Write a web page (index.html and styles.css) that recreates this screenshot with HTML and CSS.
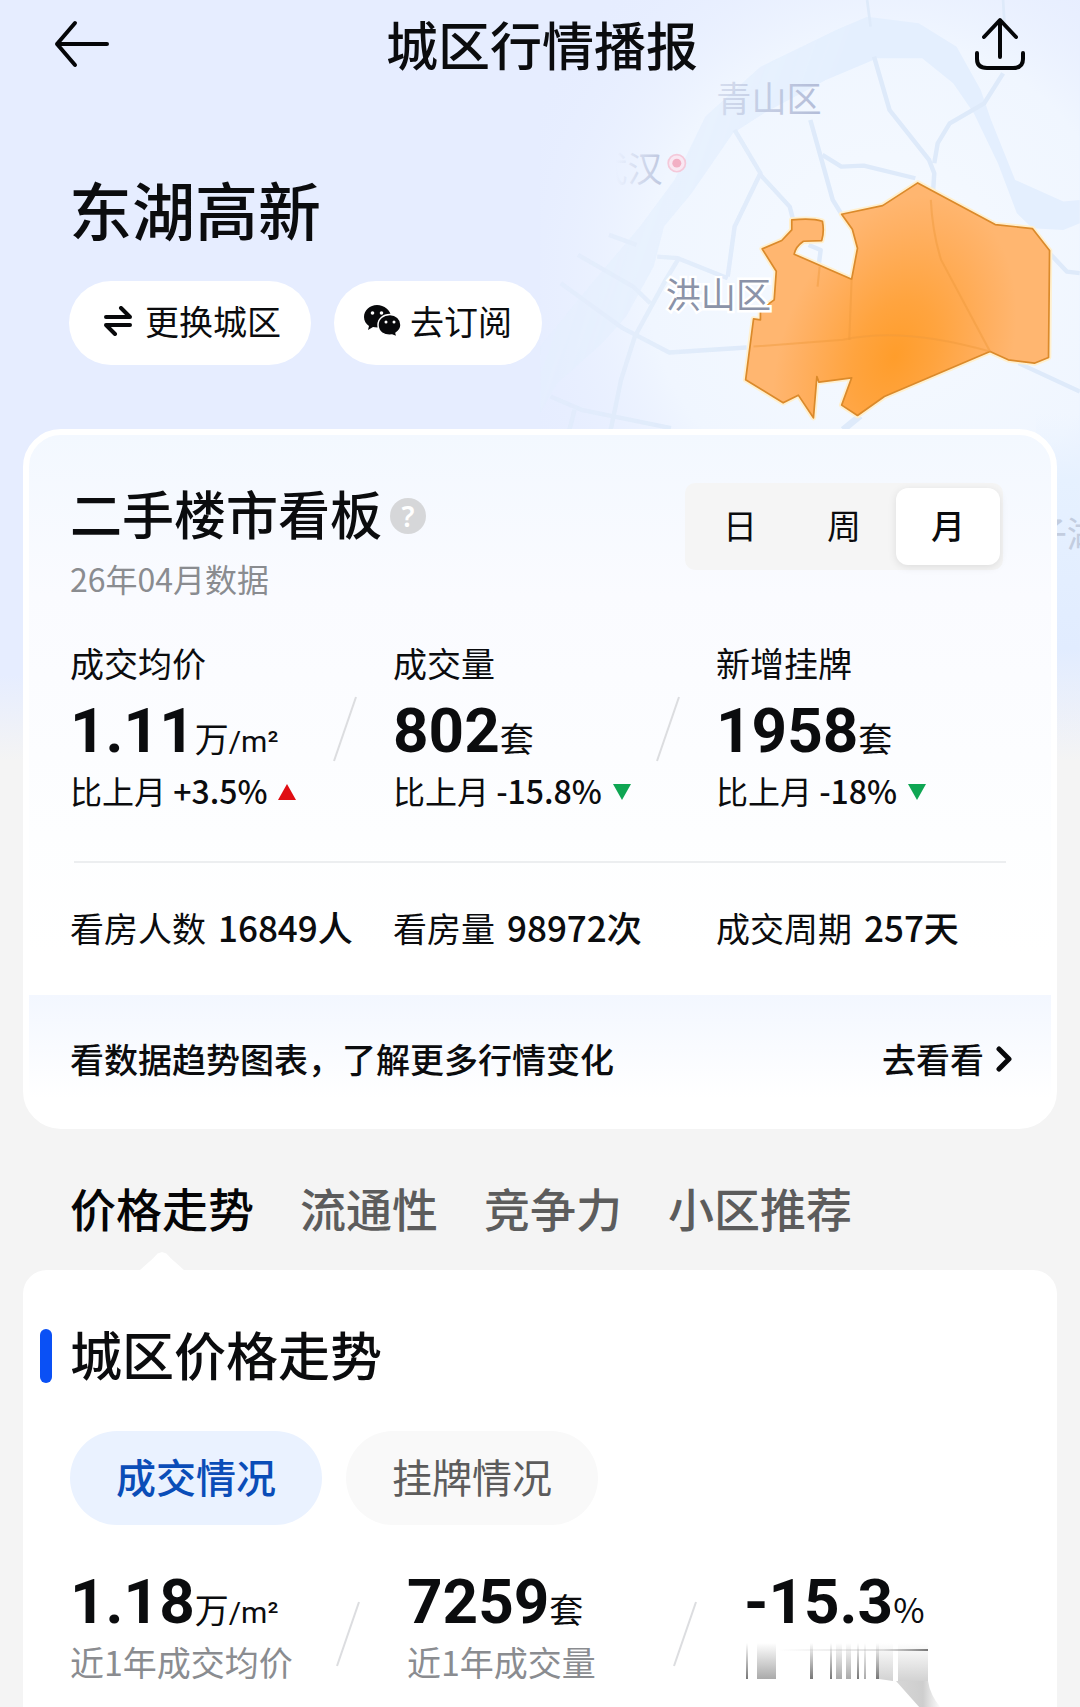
FILE: index.html
```html
<!DOCTYPE html>
<html lang="zh-CN">
<head>
<meta charset="utf-8">
<meta name="viewport" content="width=device-width, initial-scale=1">
<title>城区行情播报</title>
<link rel="stylesheet" href="styles.css">
</head>
<body>
<div class="page">
  <svg class="map" viewBox="0 0 1568 2179" aria-hidden="true">
    <defs>
      <linearGradient id="fade" x1="0" y1="0.2" x2="0.5" y2="0.35">
        <stop offset="0" stop-color="#fff" stop-opacity="0.25"/>
        <stop offset="1" stop-color="#fff"/>
      </linearGradient>
      <radialGradient id="land" gradientUnits="userSpaceOnUse" cx="1000" cy="800" r="1150">
        <stop offset="0" stop-color="#f6faff"/>
        <stop offset="0.6" stop-color="#f0f6ff"/>
        <stop offset="1" stop-color="#e6edff" stop-opacity="0"/>
      </radialGradient>
      <linearGradient id="side" x1="0" y1="0" x2="0" y2="1">
        <stop offset="0" stop-color="#eaf3ff" stop-opacity="0"/>
        <stop offset="0.2" stop-color="#e6f1ff"/>
        <stop offset="0.7" stop-color="#e1ecff"/>
        <stop offset="1" stop-color="#f4f4f4" stop-opacity="0"/>
      </linearGradient>
      <radialGradient id="heat" gradientUnits="userSpaceOnUse" cx="1030" cy="1070" r="500" gradientTransform="translate(1030 1070) rotate(-70) scale(1 .66) translate(-1030 -1070)">
        <stop offset="0" stop-color="#ff9d2b"/>
        <stop offset="0.35" stop-color="#ffa43f"/>
        <stop offset="0.8" stop-color="#ffb062"/>
        <stop offset="1" stop-color="#ffb670"/>
      </radialGradient>
      <linearGradient id="wuhan" gradientUnits="userSpaceOnUse" x1="220" y1="0" x2="350" y2="0">
        <stop offset="0" stop-color="#b4bdd8" stop-opacity="0"/>
        <stop offset="1" stop-color="#b4bdd8" stop-opacity="0.8"/>
      </linearGradient>
      <linearGradient id="qingshan" gradientUnits="userSpaceOnUse" x1="500" y1="0" x2="810" y2="0">
        <stop offset="0" stop-color="#b4bdd8" stop-opacity="0.4"/>
        <stop offset="1" stop-color="#b4bdd8"/>
      </linearGradient>
      <mask id="edge"><rect width="1568" height="1400" fill="url(#fade)"/></mask>
    </defs>
    <rect width="1568" height="1900" fill="url(#land)"/>
    <rect x="1440" y="1200" width="128" height="979" fill="url(#side)"/>
    <g transform="scale(1 .968)">
      <g mask="url(#edge)" fill="none" stroke="#deeafa" stroke-width="13" stroke-linejoin="round">
        <path fill="#e4effe" stroke="none" d="M0 1040 L150 850 L290 680 L390 540 L480 350 L640 200 L860 90 L950 50 L1100 70 L1210 140 L1280 270 L1310 360 L1380 540 L1520 605 L1568 600 L1568 670 L1520 690 L1430 685 L1385 640 L1330 490 L1260 340 L1200 250 L1110 175 L980 175 L830 240 L650 340 L560 400 L440 580 L360 680 L330 800 L250 950 L180 1030 L50 1150 L0 1240Z"/>
        <path d="M970 170 L1015 330 L1130 480 L1145 520 L1140 600"/>
        <path d="M1345 220 L1290 310 L1190 370 L1155 430 L1145 490"/>
        <path d="M785 360 L815 470 L850 600 L880 650"/>
        <path d="M820 465 L875 500 L940 497 L1090 535"/>
        <path d="M565 390 L640 520 L565 680 L545 830"/>
        <path d="M640 525 L725 620 L735 660"/>
        <path d="M340 770 L400 775 L545 835"/>
        <path d="M400 780 L365 840 L275 1010 L235 1140 L205 1290"/>
        <path d="M110 765 L270 860 L320 910"/>
        <path d="M60 850 L240 985 L375 1058 L600 1043"/>
        <path d="M30 1190 L120 1230 L380 1285 M100 1230 L85 1290"/>
        <path d="M200 705 L280 735"/>
        <path d="M780 735 L815 750 L810 790"/>
        <path d="M1480 760 L1530 815 L1568 820"/>
        <path d="M1390 1090 L1568 1175"/>
        <path d="M880 1290 L930 1248" stroke-width="20"/>
        <path d="M1345 0 L1350 90 M950 0 L960 80" stroke-width="8"/>
      </g>
      <path fill="none" stroke="#fff0cf" stroke-width="16" stroke-linejoin="round" d="M876 643 L995 617 L1097 549 L1322 674 L1430 686 L1480 752 L1477 1073 L1436 1090 L1360 1080 L1307 1055 L1000 1190 L922 1247 L876 1216 L905 1134 L810 1147 L804 1130 L794 1254 L750 1186 L706 1209 L597 1140 L620 957 L640 960 L640 930 L680 900 L686 814 L645 747 L702 722 L731 690 L731 660 Q790 654 820 664 Q826 695 818 722 L765 724 Q742 740 738 763 L905 838 L922 745 L907 688Z"/>
      <path fill="url(#heat)" stroke="#db8a2b" stroke-width="5" stroke-linejoin="round" d="M876 643 L995 617 L1097 549 L1322 674 L1430 686 L1480 752 L1477 1073 L1436 1090 L1360 1080 L1307 1055 L1000 1190 L922 1247 L876 1216 L905 1134 L810 1147 L804 1130 L794 1254 L750 1186 L706 1209 L597 1140 L620 957 L640 960 L640 930 L680 900 L686 814 L645 747 L702 722 L731 690 L731 660 Q790 654 820 664 Q826 695 818 722 L765 724 Q742 740 738 763 L905 838 L922 745 L907 688Z"/>
      <g fill="none" stroke="#ee983c" stroke-opacity=".45" stroke-width="6">
        <path d="M1135 600 Q1140 700 1165 780 L1307 1055 Q1050 980 880 1020 L620 1040"/>
        <path d="M905 838 L898 1020 M812 800 L806 860"/>
      </g>
    </g>
    <circle cx="397" cy="474" r="25" fill="#f9e7f2" stroke="#f4c9da" stroke-width="5"/>
    <circle cx="397" cy="474" r="13" fill="#f2afc4"/>
    <g class="map-text">
      <text x="512" y="326" fill="url(#qingshan)">青山区</text>
      <text x="152" y="528" fill="url(#wuhan)">武汉</text>
      <text class="near" x="365" y="895">洪山区</text>
      <text x="1428" y="1588" fill="#c3cddf">子湖</text>
    </g>
  </svg>

  <header class="topbar">
    <button class="icon-button" type="button" aria-label="返回">
      <svg width="56" height="48" viewBox="0 0 56 48" fill="none" stroke="#050608" stroke-width="4" stroke-linecap="round" stroke-linejoin="round"><path d="M21 3 L3 24 L21 45 M3 24 H53"/></svg>
    </button>
    <h1 class="topbar-title">城区行情播报</h1>
    <button class="icon-button" type="button" aria-label="分享">
      <svg width="52" height="54" viewBox="0 0 52 54" fill="none" stroke="#050608" stroke-width="4" stroke-linecap="round" stroke-linejoin="round"><path d="M26 40 V4 M10 20 L26 3 L42 20 M3 36 V42 Q3 51 13 51 H39 Q49 51 49 42 V36"/></svg>
    </button>
  </header>

  <section class="hero">
    <h2 class="district">东湖高新</h2>
    <div class="hero-actions">
      <button class="chip chip-swap" type="button">
        <svg width="28" height="30" viewBox="0 0 28 30" fill="none" stroke="#08090b" stroke-width="4" stroke-linecap="round" stroke-linejoin="round"><path d="M2 11 H26 L17 2 M26 19 H2 L11 28"/></svg>
        更换城区
      </button>
      <button class="chip chip-wechat" type="button">
        <svg width="38" height="32" viewBox="0 0 38 32"><path fill="#08090b" d="M13 0C6 0 0 5 0 12c0 4 2 7 5 9l-1 4 5-3c5 1 18 1 18-10C27 5 20 0 13 0Z"/><path fill="#08090b" stroke="#fff" stroke-width="1.5" d="M26 9.500C19 9.500 14 14 14 20c0 7 6 11 14 10l5 2-1-4c3-2 5-4.500 5-8 0-6-5-10.500-11-10.500Z"/><g fill="#fff"><circle cx="8.500" cy="8" r="1.800"/><circle cx="17.500" cy="8" r="1.800"/><circle cx="22" cy="17" r="1.500"/><circle cx="30" cy="17" r="1.500"/></g></svg>
        去订阅
      </button>
    </div>
  </section>

  <section class="board">
    <div class="board-head">
      <div>
        <h2 class="heading">二手楼市看板
          <button class="help" type="button" aria-label="说明">?</button>
        </h2>
        <p class="date">26年04月数据</p>
      </div>
      <div class="segment" role="group" aria-label="统计周期">
        <button type="button">日</button>
        <button type="button">周</button>
        <button type="button" class="is-on" aria-pressed="true">月</button>
      </div>
    </div>

    <div class="stats">
      <div class="stat">
        <div>
          <p class="label">成交均价</p>
          <p class="value"><b>1.11</b><span>万<i>/m²</i></span></p>
          <p class="compare">比上月 <em>+3.5%</em><svg width="20" height="18" viewBox="0 0 20 18"><path fill="#e00d12" d="M10 1 L19 17 H1Z"/></svg></p>
        </div>
        <svg class="slash" width="24" height="66" viewBox="0 0 24 66"><path d="M23 1 L1 65"/></svg>
      </div>
      <div class="stat">
        <div>
          <p class="label">成交量</p>
          <p class="value"><b>802</b><span>套</span></p>
          <p class="compare">比上月 <em>-15.8%</em><svg width="20" height="18" viewBox="0 0 20 18"><path fill="#0fa653" d="M10 17 L19 1 H1Z"/></svg></p>
        </div>
        <svg class="slash" width="24" height="66" viewBox="0 0 24 66"><path d="M23 1 L1 65"/></svg>
      </div>
      <div class="stat">
        <div>
          <p class="label">新增挂牌</p>
          <p class="value"><b>1958</b><span>套</span></p>
          <p class="compare">比上月 <em>-18%</em><svg width="20" height="18" viewBox="0 0 20 18"><path fill="#0fa653" d="M10 17 L19 1 H1Z"/></svg></p>
        </div>
      </div>
    </div>

    <hr class="rule">

    <div class="facts">
      <p>看房人数<em>16849人</em></p>
      <p>看房量<em>98972次</em></p>
      <p>成交周期<em>257天</em></p>
    </div>

    <a class="more" href="#trend">
      <span>看数据趋势图表，了解更多行情变化</span>
      <span class="more-go">去看看
        <svg width="16" height="26" viewBox="0 0 16 26" fill="none" stroke="#08090b" stroke-width="5" stroke-linecap="round" stroke-linejoin="round"><path d="M3 3 L13 13 L3 23"/></svg>
      </span>
    </a>
  </section>

  <nav class="tabs">
    <a class="is-on" href="#trend">价格走势</a>
    <a href="#flow">流通性</a>
    <a href="#rival">竞争力</a>
    <a href="#estates">小区推荐</a>
  </nav>

  <section class="trend" id="trend">
    <h2 class="heading trend-title">城区价格走势</h2>
    <div class="pills">
      <button class="is-on" type="button" aria-pressed="true">成交情况</button>
      <button type="button">挂牌情况</button>
    </div>
    <div class="totals">
      <div class="stat">
        <div>
          <p class="value"><b>1.18</b><span>万<i>/m²</i></span></p>
          <p class="caption">近1年成交均价</p>
        </div>
        <svg class="slash" width="24" height="66" viewBox="0 0 24 66"><path d="M23 1 L1 65"/></svg>
      </div>
      <div class="stat">
        <div>
          <p class="value"><b>7259</b><span>套</span></p>
          <p class="caption">近1年成交量</p>
        </div>
        <svg class="slash" width="24" height="66" viewBox="0 0 24 66"><path d="M23 1 L1 65"/></svg>
      </div>
      <div class="stat">
        <div>
          <p class="value"><b>-15.3</b><span>%</span></p>
          <svg class="smear" width="200" height="65" viewBox="0 0 200 65" aria-hidden="true">
            <defs>
              <linearGradient id="down" x1="0" y1="0" x2="0" y2="1"><stop offset="0" stop-color="#777" stop-opacity="0"/><stop offset="1" stop-color="#777"/></linearGradient>
              <linearGradient id="haze" x1="0" y1="0" x2="0" y2="1"><stop offset="0" stop-color="#aaa" stop-opacity="0"/><stop offset="1" stop-color="#aaa"/></linearGradient>
              <linearGradient id="cloud" x1="0" y1="0" x2="0" y2="1"><stop offset="0" stop-color="#d2d2d2" stop-opacity="0"/><stop offset="1" stop-color="#d2d2d2"/></linearGradient>
              <linearGradient id="tail" x1="0" y1="0" x2="1" y2="0"><stop offset="0" stop-color="#d6d6d6"/><stop offset=".6" stop-color="#cecece"/><stop offset="1" stop-color="#fff"/></linearGradient>
              <linearGradient id="line" x1="0" y1="0" x2="1" y2="0"><stop offset="0" stop-color="#888" stop-opacity="0"/><stop offset=".7" stop-color="#999" stop-opacity=".3"/><stop offset="1" stop-color="#777"/></linearGradient>
            </defs>
            <path fill="url(#down)" d="M2 0h2v36h-2z M66 0h3v36h-3z M86 0h2v36h-2z M113 0h2v36h-2z M132 0h3v36h-3z"/>
            <path fill="url(#haze)" d="M13 0h19v36h-19z M92 0h6v36h-6z M102 0h5v36h-5z M120 0h2v36h-2z"/>
            <path fill="url(#cloud)" d="M135 0h14v38l-14-2z M154 0h30v38h-30z"/>
            <path fill="url(#tail)" d="M152 38 H184 Q186 52 197 65 H176Z"/>
            <path fill="url(#line)" d="M34 6h150v2h-150z"/>
          </svg>
        </div>
      </div>
    </div>
  </section>
</div>
</body>
</html>
```
FILE: styles.css
```css
* { box-sizing: border-box; }

body {
  margin: 0;
  background: #f4f4f4;
  color: #0b0c0e;
  font-family: "Noto Sans CJK SC", sans-serif;
  font-size: 34px;
  line-height: 48px;
}

h1, h2, p { margin: 0; font-weight: 500; }
em, i { font-style: normal; }
svg { flex: none; }
a { color: inherit; text-decoration: none; }

button {
  padding: 0;
  border: 0;
  background: none;
  color: inherit;
  font: inherit;
  cursor: pointer;
}

.page {
  position: relative;
  display: flex;
  flex-direction: column;
  min-height: 100vh;
  overflow: hidden;
  background: linear-gradient(#e6edff 0, #e6edff 675px, #f4f4f4 760px);
}

/* District map behind the header */
.map {
  position: absolute;
  top: 0;
  right: 0;
  width: 540px;
  height: 750px;
}
.map-text { font-size: 102px; }
.map-text .near {
  fill: #8b93a8;
  stroke: #fff;
  stroke-width: 14px;
  paint-order: stroke;
}

.topbar, .hero, .board { position: relative; }

.topbar {
  display: flex;
  align-items: center;
  justify-content: space-between;
  height: 88px;
  padding: 0 54px;
}
.topbar-title { font-size: 52px; line-height: 72px; }
.icon-button { display: flex; }

.hero { padding: 76px 69px 64px; }
.district { font-size: 63px; line-height: 88px; }
.hero-actions { display: flex; gap: 23px; margin-top: 29px; }
.chip {
  display: flex;
  align-items: center;
  height: 84px;
  border-radius: 42px;
  background: #fff;
}
.chip-swap { gap: 13px; padding: 0 30px 4px 35px; }
.chip-wechat { gap: 8px; padding: 0 30px 4px; }

.board {
  margin: 0 23px;
  border: 6px solid #fff;
  border-radius: 38px;
  background: linear-gradient(#f3f8ff, #fafbff 160px, #fdfeff 400px, #fff 520px) #fff;
}
.board-head {
  display: flex;
  align-items: flex-start;
  justify-content: space-between;
  padding: 42px 48px 0 41px;
}
.heading {
  display: flex;
  align-items: center;
  gap: 8px;
  font-size: 52px;
  line-height: 72px;
}
.help {
  width: 36px;
  height: 36px;
  margin-top: 6px;
  border-radius: 50%;
  background: #d6d7d9;
  color: #fff;
  font: 600 28px/36px "Noto Sans", sans-serif;
}
.date { margin-top: 5px; color: #8a8c90; font-size: 32px; font-weight: 400; }

.segment {
  display: grid;
  grid-template-columns: repeat(3, 104px);
  margin-top: 6px;
  padding: 5px 3px;
  border-radius: 10px;
  background: #f5f5f5;
}
.segment button { height: 77px; padding-bottom: 4px; border-radius: 12px; }
.segment .is-on { background: #fff; box-shadow: 0 2px 8px rgba(0, 0, 0, .1); font-weight: 500; }

.stats {
  display: grid;
  grid-template-columns: repeat(3, 1fr);
  padding: 37px 12px 0 41px;
}
.stat {
  display: flex;
  align-items: center;
  justify-content: space-between;
  white-space: nowrap;
}
.slash { margin: 4px 36px 0 0; fill: none; stroke: #dcdde0; stroke-width: 2; }
.label { font-weight: 400; }
.value { display: flex; align-items: baseline; height: 64px; line-height: 40px; font-weight: 400; }
.value b { font: 700 62px/62px "Roboto", sans-serif; }
.value i { font-family: "Roboto", sans-serif; font-size: 30px; }
.label + .value { margin-top: 13px; }
.compare { display: flex; align-items: center; margin-top: 2px; font-size: 32px; font-weight: 400; white-space: pre; }
.compare em { font-weight: 500; }
.compare svg { margin: 4px 0 0 10px; }

.rule {
  height: 2px;
  margin: 47px 45px 0;
  border: 0;
  background: #eceef0;
}

.facts {
  display: grid;
  grid-template-columns: repeat(3, 1fr);
  padding: 40px 12px 0 41px;
  white-space: nowrap;
}
.facts p { font-weight: 400; }
.facts em { margin-left: 12px; font-size: 35px; font-weight: 500; }

.more {
  display: flex;
  align-items: center;
  justify-content: space-between;
  height: 128px;
  margin-top: 43px;
  padding: 0 39px 0 41px;
  border-radius: 0 0 32px 32px;
  background: linear-gradient(#f3f7ff, #fff 104px);
  font-weight: 500;
}
.more-go { display: flex; align-items: center; gap: 12px; }

.tabs {
  display: flex;
  gap: 46px;
  height: 141px;
  padding: 46px 70px 0;
  color: #5c5c5c;
  font-size: 46px;
  line-height: 64px;
}
.tabs a { display: flex; flex-direction: column; align-items: center; justify-content: space-between; font-weight: 500; }
.tabs .is-on { color: #050506; }
.tabs .is-on::after {
  width: 44px;
  height: 18px;
  background: #fff;
  clip-path: polygon(0 100%, 30% 35%, 40% 8%, 50% 0, 60% 8%, 70% 35%, 100% 100%);
  content: "";
}

.trend {
  flex: 1;
  margin: 0 23px;
  padding: 48px 0 0 47px;
  border-radius: 24px 24px 0 0;
  background: #fff;
}
.trend-title::before {
  width: 12px;
  height: 54px;
  margin: 4px 10px 0 -30px;
  border-radius: 6px;
  background: #0a50f5;
  content: "";
}
.pills { display: flex; gap: 24px; margin-top: 41px; }
.pills button {
  height: 94px;
  padding: 0 46px 4px;
  border-radius: 47px;
  background: #f9f9f9;
  color: #5c5c5c;
  font-size: 40px;
}
.pills .is-on { background: #eaf2ff; color: #0a4db8; font-weight: 500; }

.totals {
  display: grid;
  grid-template-columns: 337fr 337fr 313fr;
  padding-top: 46px;
}
.totals .stat { align-items: flex-start; }
.totals .slash { margin: 30px 47px 0 0; }
.caption { margin-top: 3px; color: #8a8c90; font-weight: 400; }
.smear { display: block; margin-top: 8px; }
```
